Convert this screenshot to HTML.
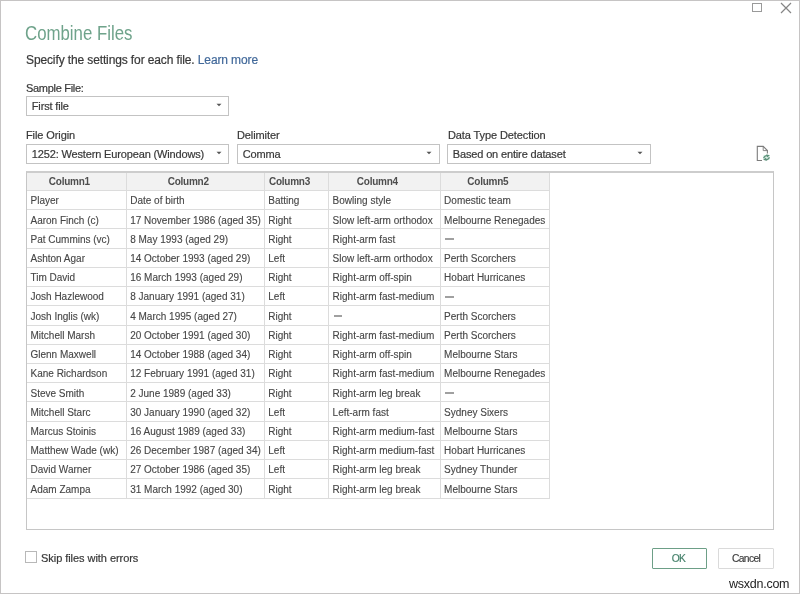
<!DOCTYPE html><html><head><meta charset="utf-8"><style>
*{margin:0;padding:0;box-sizing:border-box}
html,body{width:800px;height:594px;overflow:hidden;background:#fff;font-family:"Liberation Sans", sans-serif}
.t{position:absolute;white-space:nowrap}
.b{position:absolute}
</style></head><body><div id="w" style="position:absolute;left:0;top:0;width:800px;height:594px;filter:blur(0.3px)">
<div class="b" style="left:0;top:0;width:800px;height:594px;border:1px solid #c6c4c4"></div>
<div class="b" style="left:752px;top:3px;width:9.5px;height:9px;border:1.2px solid #9a9a9a"></div>
<svg class="b" style="left:779px;top:0.6px" width="14" height="14" viewBox="0 0 14 14"><path d="M2 2L12 12M12 2L2 12" stroke="#858585" stroke-width="1.2" fill="none"/></svg>
<div class="t" style="left:25.0px;top:23.86px;font-size:19.3px;line-height:19.3px;color:#6fa38b;transform:scaleX(0.872);transform-origin:0 0">Combine Files</div>
<div class="t" style="left:26px;top:54.04px;font-size:12px;line-height:12px;color:#383838;-webkit-text-stroke:0.2px #383838;letter-spacing:-0.12px">Specify the settings for each file. <span style="color:#42699a;-webkit-text-stroke:0.2px #42699a">Learn more</span></div>
<div class="t" style="left:26px;top:82.59px;font-size:11px;line-height:11px;color:#383838;-webkit-text-stroke:0.2px #383838;letter-spacing:-0.3px">Sample File:</div>
<div class="b" style="left:26px;top:96px;width:203px;height:20px;border:1px solid #c3c3c3;background:#fff"></div>
<div class="t" style="left:31.8px;top:100.79px;font-size:11px;line-height:11px;color:#383838;-webkit-text-stroke:0.2px #383838;letter-spacing:-0.15px">First file</div>
<svg class="b" style="left:215.5px;top:103.4px" width="6" height="4" viewBox="0 0 6 4"><path d="M0.5 0.8L5.5 0.8L3 3.3Z" fill="#555"/></svg>
<div class="t" style="left:26px;top:129.89px;font-size:11px;line-height:11px;color:#383838;-webkit-text-stroke:0.2px #383838;letter-spacing:-0.1px">File Origin</div>
<div class="t" style="left:237px;top:129.89px;font-size:11px;line-height:11px;color:#383838;-webkit-text-stroke:0.2px #383838;letter-spacing:-0.1px">Delimiter</div>
<div class="t" style="left:448px;top:129.89px;font-size:11px;line-height:11px;color:#383838;-webkit-text-stroke:0.2px #383838;letter-spacing:-0.1px">Data Type Detection</div>
<div class="b" style="left:26px;top:144px;width:203px;height:19.5px;border:1px solid #c3c3c3;background:#fff"></div>
<div class="t" style="left:31.8px;top:148.79px;font-size:11px;line-height:11px;color:#383838;-webkit-text-stroke:0.2px #383838;letter-spacing:-0.15px">1252: Western European (Windows)</div>
<svg class="b" style="left:215.5px;top:151.15px" width="6" height="4" viewBox="0 0 6 4"><path d="M0.5 0.8L5.5 0.8L3 3.3Z" fill="#555"/></svg>
<div class="b" style="left:237px;top:144px;width:202.5px;height:19.5px;border:1px solid #c3c3c3;background:#fff"></div>
<div class="t" style="left:242.8px;top:148.79px;font-size:11px;line-height:11px;color:#383838;-webkit-text-stroke:0.2px #383838;letter-spacing:-0.15px">Comma</div>
<svg class="b" style="left:426.0px;top:151.15px" width="6" height="4" viewBox="0 0 6 4"><path d="M0.5 0.8L5.5 0.8L3 3.3Z" fill="#555"/></svg>
<div class="b" style="left:447px;top:144px;width:203.5px;height:19.5px;border:1px solid #c3c3c3;background:#fff"></div>
<div class="t" style="left:452.8px;top:148.79px;font-size:11px;line-height:11px;color:#383838;-webkit-text-stroke:0.2px #383838;letter-spacing:-0.15px">Based on entire dataset</div>
<svg class="b" style="left:637.0px;top:151.15px" width="6" height="4" viewBox="0 0 6 4"><path d="M0.5 0.8L5.5 0.8L3 3.3Z" fill="#555"/></svg>
<svg class="b" style="left:750px;top:140px" width="26" height="26" viewBox="750 140 26 26">
<path d="M762 160.5H757.3V146.4H763.2L767.4 150.6V153.6" stroke="#7c7c7c" stroke-width="1.1" fill="none"/>
<path d="M763.2 146.4V150.6H767.4" stroke="#7c7c7c" stroke-width="0.9" fill="none"/>
<rect x="763.3" y="155" width="6.4" height="5" fill="#dff3ea"/>
<path d="M763.6 158.2Q764.5 155.6 767 155.6" stroke="#5e917b" stroke-width="1.2" fill="none"/>
<path d="M766.2 154.3L769.8 155.2L767.2 157.6Z" fill="#5e917b"/>
<path d="M769.4 157.2Q768.6 159.6 766 159.6" stroke="#5e917b" stroke-width="1.2" fill="none"/>
<path d="M766.8 161L763.2 159.8L766 157.5Z" fill="#5e917b"/>
</svg>
<div class="b" style="left:26px;top:171px;width:748px;height:359px;border:1.2px solid #c6c6c6;border-top:2px solid #cdcdcd"></div>
<div class="b" style="left:27px;top:173px;width:522.6px;height:17.5px;background:#f2f2f2"></div>
<div class="b" style="left:27px;top:190.0px;width:522.6px;height:1px;background:#dcdcdc"></div>
<div class="b" style="left:27px;top:209.22px;width:522.6px;height:1px;background:#dcdcdc"></div>
<div class="b" style="left:27px;top:228.44px;width:522.6px;height:1px;background:#dcdcdc"></div>
<div class="b" style="left:27px;top:247.66px;width:522.6px;height:1px;background:#dcdcdc"></div>
<div class="b" style="left:27px;top:266.88px;width:522.6px;height:1px;background:#dcdcdc"></div>
<div class="b" style="left:27px;top:286.10px;width:522.6px;height:1px;background:#dcdcdc"></div>
<div class="b" style="left:27px;top:305.32px;width:522.6px;height:1px;background:#dcdcdc"></div>
<div class="b" style="left:27px;top:324.54px;width:522.6px;height:1px;background:#dcdcdc"></div>
<div class="b" style="left:27px;top:343.76px;width:522.6px;height:1px;background:#dcdcdc"></div>
<div class="b" style="left:27px;top:362.98px;width:522.6px;height:1px;background:#dcdcdc"></div>
<div class="b" style="left:27px;top:382.20px;width:522.6px;height:1px;background:#dcdcdc"></div>
<div class="b" style="left:27px;top:401.42px;width:522.6px;height:1px;background:#dcdcdc"></div>
<div class="b" style="left:27px;top:420.64px;width:522.6px;height:1px;background:#dcdcdc"></div>
<div class="b" style="left:27px;top:439.86px;width:522.6px;height:1px;background:#dcdcdc"></div>
<div class="b" style="left:27px;top:459.08px;width:522.6px;height:1px;background:#dcdcdc"></div>
<div class="b" style="left:27px;top:478.30px;width:522.6px;height:1px;background:#dcdcdc"></div>
<div class="b" style="left:27px;top:497.52px;width:522.6px;height:1px;background:#dcdcdc"></div>
<div class="b" style="left:125.7px;top:173px;width:1px;height:325.02px;background:#dcdcdc"></div>
<div class="b" style="left:263.8px;top:173px;width:1px;height:325.02px;background:#dcdcdc"></div>
<div class="b" style="left:328.1px;top:173px;width:1px;height:325.02px;background:#dcdcdc"></div>
<div class="b" style="left:439.6px;top:173px;width:1px;height:325.02px;background:#dcdcdc"></div>
<div class="b" style="left:549.1px;top:173px;width:1px;height:325.02px;background:#dcdcdc"></div>
<div class="t" style="left:29.349999999999994px;width:80px;text-align:center;top:176.63px;font-size:10px;line-height:10px;font-weight:bold;color:#4e4e4e;letter-spacing:-0.25px">Column1</div>
<div class="t" style="left:148.25px;width:80px;text-align:center;top:176.63px;font-size:10px;line-height:10px;font-weight:bold;color:#4e4e4e;letter-spacing:-0.25px">Column2</div>
<div class="t" style="left:249.45000000000005px;width:80px;text-align:center;top:176.63px;font-size:10px;line-height:10px;font-weight:bold;color:#4e4e4e;letter-spacing:-0.25px">Column3</div>
<div class="t" style="left:337.35px;width:80px;text-align:center;top:176.63px;font-size:10px;line-height:10px;font-weight:bold;color:#4e4e4e;letter-spacing:-0.25px">Column4</div>
<div class="t" style="left:447.85px;width:80px;text-align:center;top:176.63px;font-size:10px;line-height:10px;font-weight:bold;color:#4e4e4e;letter-spacing:-0.25px">Column5</div>
<div class="t" style="left:30.5px;top:196.34px;font-size:10px;line-height:10px;color:#464646;-webkit-text-stroke:0.12px #464646">Player</div>
<div class="t" style="left:130.2px;top:196.34px;font-size:10px;line-height:10px;color:#464646;-webkit-text-stroke:0.12px #464646">Date of birth</div>
<div class="t" style="left:268.3px;top:196.34px;font-size:10px;line-height:10px;color:#464646;-webkit-text-stroke:0.12px #464646">Batting</div>
<div class="t" style="left:332.6px;top:196.34px;font-size:10px;line-height:10px;color:#464646;-webkit-text-stroke:0.12px #464646">Bowling style</div>
<div class="t" style="left:444.1px;top:196.34px;font-size:10px;line-height:10px;color:#464646;-webkit-text-stroke:0.12px #464646">Domestic team</div>
<div class="t" style="left:30.5px;top:215.56px;font-size:10px;line-height:10px;color:#464646;-webkit-text-stroke:0.12px #464646">Aaron Finch (c)</div>
<div class="t" style="left:130.2px;top:215.56px;font-size:10px;line-height:10px;color:#464646;-webkit-text-stroke:0.12px #464646">17 November 1986 (aged 35)</div>
<div class="t" style="left:268.3px;top:215.56px;font-size:10px;line-height:10px;color:#464646;-webkit-text-stroke:0.12px #464646">Right</div>
<div class="t" style="left:332.6px;top:215.56px;font-size:10px;line-height:10px;color:#464646;-webkit-text-stroke:0.12px #464646">Slow left-arm orthodox</div>
<div class="t" style="left:444.1px;top:215.56px;font-size:10px;line-height:10px;color:#464646;-webkit-text-stroke:0.12px #464646">Melbourne Renegades</div>
<div class="t" style="left:30.5px;top:234.78px;font-size:10px;line-height:10px;color:#464646;-webkit-text-stroke:0.12px #464646">Pat Cummins (vc)</div>
<div class="t" style="left:130.2px;top:234.78px;font-size:10px;line-height:10px;color:#464646;-webkit-text-stroke:0.12px #464646">8 May 1993 (aged 29)</div>
<div class="t" style="left:268.3px;top:234.78px;font-size:10px;line-height:10px;color:#464646;-webkit-text-stroke:0.12px #464646">Right</div>
<div class="t" style="left:332.6px;top:234.78px;font-size:10px;line-height:10px;color:#464646;-webkit-text-stroke:0.12px #464646">Right-arm fast</div>
<div class="b" style="left:445.20px;top:238px;width:8.4px;height:2px;background:#a0a0a0"></div>
<div class="t" style="left:30.5px;top:253.99px;font-size:10px;line-height:10px;color:#464646;-webkit-text-stroke:0.12px #464646">Ashton Agar</div>
<div class="t" style="left:130.2px;top:253.99px;font-size:10px;line-height:10px;color:#464646;-webkit-text-stroke:0.12px #464646">14 October 1993 (aged 29)</div>
<div class="t" style="left:268.3px;top:253.99px;font-size:10px;line-height:10px;color:#464646;-webkit-text-stroke:0.12px #464646">Left</div>
<div class="t" style="left:332.6px;top:253.99px;font-size:10px;line-height:10px;color:#464646;-webkit-text-stroke:0.12px #464646">Slow left-arm orthodox</div>
<div class="t" style="left:444.1px;top:253.99px;font-size:10px;line-height:10px;color:#464646;-webkit-text-stroke:0.12px #464646">Perth Scorchers</div>
<div class="t" style="left:30.5px;top:273.22px;font-size:10px;line-height:10px;color:#464646;-webkit-text-stroke:0.12px #464646">Tim David</div>
<div class="t" style="left:130.2px;top:273.22px;font-size:10px;line-height:10px;color:#464646;-webkit-text-stroke:0.12px #464646">16 March 1993 (aged 29)</div>
<div class="t" style="left:268.3px;top:273.22px;font-size:10px;line-height:10px;color:#464646;-webkit-text-stroke:0.12px #464646">Right</div>
<div class="t" style="left:332.6px;top:273.22px;font-size:10px;line-height:10px;color:#464646;-webkit-text-stroke:0.12px #464646">Right-arm off-spin</div>
<div class="t" style="left:444.1px;top:273.22px;font-size:10px;line-height:10px;color:#464646;-webkit-text-stroke:0.12px #464646">Hobart Hurricanes</div>
<div class="t" style="left:30.5px;top:292.44px;font-size:10px;line-height:10px;color:#464646;-webkit-text-stroke:0.12px #464646">Josh Hazlewood</div>
<div class="t" style="left:130.2px;top:292.44px;font-size:10px;line-height:10px;color:#464646;-webkit-text-stroke:0.12px #464646">8 January 1991 (aged 31)</div>
<div class="t" style="left:268.3px;top:292.44px;font-size:10px;line-height:10px;color:#464646;-webkit-text-stroke:0.12px #464646">Left</div>
<div class="t" style="left:332.6px;top:292.44px;font-size:10px;line-height:10px;color:#464646;-webkit-text-stroke:0.12px #464646">Right-arm fast-medium</div>
<div class="b" style="left:445.20px;top:296px;width:8.4px;height:2px;background:#a0a0a0"></div>
<div class="t" style="left:30.5px;top:311.66px;font-size:10px;line-height:10px;color:#464646;-webkit-text-stroke:0.12px #464646">Josh Inglis (wk)</div>
<div class="t" style="left:130.2px;top:311.66px;font-size:10px;line-height:10px;color:#464646;-webkit-text-stroke:0.12px #464646">4 March 1995 (aged 27)</div>
<div class="t" style="left:268.3px;top:311.66px;font-size:10px;line-height:10px;color:#464646;-webkit-text-stroke:0.12px #464646">Right</div>
<div class="b" style="left:333.70px;top:315px;width:8.4px;height:2px;background:#a0a0a0"></div>
<div class="t" style="left:444.1px;top:311.66px;font-size:10px;line-height:10px;color:#464646;-webkit-text-stroke:0.12px #464646">Perth Scorchers</div>
<div class="t" style="left:30.5px;top:330.88px;font-size:10px;line-height:10px;color:#464646;-webkit-text-stroke:0.12px #464646">Mitchell Marsh</div>
<div class="t" style="left:130.2px;top:330.88px;font-size:10px;line-height:10px;color:#464646;-webkit-text-stroke:0.12px #464646">20 October 1991 (aged 30)</div>
<div class="t" style="left:268.3px;top:330.88px;font-size:10px;line-height:10px;color:#464646;-webkit-text-stroke:0.12px #464646">Right</div>
<div class="t" style="left:332.6px;top:330.88px;font-size:10px;line-height:10px;color:#464646;-webkit-text-stroke:0.12px #464646">Right-arm fast-medium</div>
<div class="t" style="left:444.1px;top:330.88px;font-size:10px;line-height:10px;color:#464646;-webkit-text-stroke:0.12px #464646">Perth Scorchers</div>
<div class="t" style="left:30.5px;top:350.10px;font-size:10px;line-height:10px;color:#464646;-webkit-text-stroke:0.12px #464646">Glenn Maxwell</div>
<div class="t" style="left:130.2px;top:350.10px;font-size:10px;line-height:10px;color:#464646;-webkit-text-stroke:0.12px #464646">14 October 1988 (aged 34)</div>
<div class="t" style="left:268.3px;top:350.10px;font-size:10px;line-height:10px;color:#464646;-webkit-text-stroke:0.12px #464646">Right</div>
<div class="t" style="left:332.6px;top:350.10px;font-size:10px;line-height:10px;color:#464646;-webkit-text-stroke:0.12px #464646">Right-arm off-spin</div>
<div class="t" style="left:444.1px;top:350.10px;font-size:10px;line-height:10px;color:#464646;-webkit-text-stroke:0.12px #464646">Melbourne Stars</div>
<div class="t" style="left:30.5px;top:369.31px;font-size:10px;line-height:10px;color:#464646;-webkit-text-stroke:0.12px #464646">Kane Richardson</div>
<div class="t" style="left:130.2px;top:369.31px;font-size:10px;line-height:10px;color:#464646;-webkit-text-stroke:0.12px #464646">12 February 1991 (aged 31)</div>
<div class="t" style="left:268.3px;top:369.31px;font-size:10px;line-height:10px;color:#464646;-webkit-text-stroke:0.12px #464646">Right</div>
<div class="t" style="left:332.6px;top:369.31px;font-size:10px;line-height:10px;color:#464646;-webkit-text-stroke:0.12px #464646">Right-arm fast-medium</div>
<div class="t" style="left:444.1px;top:369.31px;font-size:10px;line-height:10px;color:#464646;-webkit-text-stroke:0.12px #464646">Melbourne Renegades</div>
<div class="t" style="left:30.5px;top:388.54px;font-size:10px;line-height:10px;color:#464646;-webkit-text-stroke:0.12px #464646">Steve Smith</div>
<div class="t" style="left:130.2px;top:388.54px;font-size:10px;line-height:10px;color:#464646;-webkit-text-stroke:0.12px #464646">2 June 1989 (aged 33)</div>
<div class="t" style="left:268.3px;top:388.54px;font-size:10px;line-height:10px;color:#464646;-webkit-text-stroke:0.12px #464646">Right</div>
<div class="t" style="left:332.6px;top:388.54px;font-size:10px;line-height:10px;color:#464646;-webkit-text-stroke:0.12px #464646">Right-arm leg break</div>
<div class="b" style="left:445.20px;top:392px;width:8.4px;height:2px;background:#a0a0a0"></div>
<div class="t" style="left:30.5px;top:407.76px;font-size:10px;line-height:10px;color:#464646;-webkit-text-stroke:0.12px #464646">Mitchell Starc</div>
<div class="t" style="left:130.2px;top:407.76px;font-size:10px;line-height:10px;color:#464646;-webkit-text-stroke:0.12px #464646">30 January 1990 (aged 32)</div>
<div class="t" style="left:268.3px;top:407.76px;font-size:10px;line-height:10px;color:#464646;-webkit-text-stroke:0.12px #464646">Left</div>
<div class="t" style="left:332.6px;top:407.76px;font-size:10px;line-height:10px;color:#464646;-webkit-text-stroke:0.12px #464646">Left-arm fast</div>
<div class="t" style="left:444.1px;top:407.76px;font-size:10px;line-height:10px;color:#464646;-webkit-text-stroke:0.12px #464646">Sydney Sixers</div>
<div class="t" style="left:30.5px;top:426.98px;font-size:10px;line-height:10px;color:#464646;-webkit-text-stroke:0.12px #464646">Marcus Stoinis</div>
<div class="t" style="left:130.2px;top:426.98px;font-size:10px;line-height:10px;color:#464646;-webkit-text-stroke:0.12px #464646">16 August 1989 (aged 33)</div>
<div class="t" style="left:268.3px;top:426.98px;font-size:10px;line-height:10px;color:#464646;-webkit-text-stroke:0.12px #464646">Right</div>
<div class="t" style="left:332.6px;top:426.98px;font-size:10px;line-height:10px;color:#464646;-webkit-text-stroke:0.12px #464646">Right-arm medium-fast</div>
<div class="t" style="left:444.1px;top:426.98px;font-size:10px;line-height:10px;color:#464646;-webkit-text-stroke:0.12px #464646">Melbourne Stars</div>
<div class="t" style="left:30.5px;top:446.20px;font-size:10px;line-height:10px;color:#464646;-webkit-text-stroke:0.12px #464646">Matthew Wade (wk)</div>
<div class="t" style="left:130.2px;top:446.20px;font-size:10px;line-height:10px;color:#464646;-webkit-text-stroke:0.12px #464646">26 December 1987 (aged 34)</div>
<div class="t" style="left:268.3px;top:446.20px;font-size:10px;line-height:10px;color:#464646;-webkit-text-stroke:0.12px #464646">Left</div>
<div class="t" style="left:332.6px;top:446.20px;font-size:10px;line-height:10px;color:#464646;-webkit-text-stroke:0.12px #464646">Right-arm medium-fast</div>
<div class="t" style="left:444.1px;top:446.20px;font-size:10px;line-height:10px;color:#464646;-webkit-text-stroke:0.12px #464646">Hobart Hurricanes</div>
<div class="t" style="left:30.5px;top:465.42px;font-size:10px;line-height:10px;color:#464646;-webkit-text-stroke:0.12px #464646">David Warner</div>
<div class="t" style="left:130.2px;top:465.42px;font-size:10px;line-height:10px;color:#464646;-webkit-text-stroke:0.12px #464646">27 October 1986 (aged 35)</div>
<div class="t" style="left:268.3px;top:465.42px;font-size:10px;line-height:10px;color:#464646;-webkit-text-stroke:0.12px #464646">Left</div>
<div class="t" style="left:332.6px;top:465.42px;font-size:10px;line-height:10px;color:#464646;-webkit-text-stroke:0.12px #464646">Right-arm leg break</div>
<div class="t" style="left:444.1px;top:465.42px;font-size:10px;line-height:10px;color:#464646;-webkit-text-stroke:0.12px #464646">Sydney Thunder</div>
<div class="t" style="left:30.5px;top:484.64px;font-size:10px;line-height:10px;color:#464646;-webkit-text-stroke:0.12px #464646">Adam Zampa</div>
<div class="t" style="left:130.2px;top:484.64px;font-size:10px;line-height:10px;color:#464646;-webkit-text-stroke:0.12px #464646">31 March 1992 (aged 30)</div>
<div class="t" style="left:268.3px;top:484.64px;font-size:10px;line-height:10px;color:#464646;-webkit-text-stroke:0.12px #464646">Right</div>
<div class="t" style="left:332.6px;top:484.64px;font-size:10px;line-height:10px;color:#464646;-webkit-text-stroke:0.12px #464646">Right-arm leg break</div>
<div class="t" style="left:444.1px;top:484.64px;font-size:10px;line-height:10px;color:#464646;-webkit-text-stroke:0.12px #464646">Melbourne Stars</div>
<div class="b" style="left:25.3px;top:551.4px;width:11.4px;height:11.4px;border:1.1px solid #b8b8b8;background:#fff"></div>
<div class="t" style="left:41px;top:552.59px;font-size:11px;line-height:11px;color:#383838;-webkit-text-stroke:0.2px #383838;letter-spacing:-0.05px">Skip files with errors</div>
<div class="b" style="left:651.5px;top:548.3px;width:55px;height:20.5px;border:1.5px solid #6d9f87;border-radius:1px;background:#fff"></div>
<div class="t" style="left:651px;top:554.08px;font-size:10.3px;line-height:10.3px;color:#44806a;width:55px;text-align:center;letter-spacing:-0.7px;-webkit-text-stroke:0.15px #44806a">OK</div>
<div class="b" style="left:718px;top:548.3px;width:55.5px;height:20.5px;border:1.6px solid #dadada;border-radius:1px;background:#fff"></div>
<div class="t" style="left:718.3px;top:554.08px;font-size:10.3px;line-height:10.3px;color:#3a3a3a;width:55.5px;text-align:center;letter-spacing:-0.65px;-webkit-text-stroke:0.15px #3a3a3a">Cancel</div>
<div class="t" style="left:729px;top:577.92px;font-size:12.5px;line-height:12.5px;color:#222;letter-spacing:-0.25px">wsxdn.com</div>
</div></body></html>
